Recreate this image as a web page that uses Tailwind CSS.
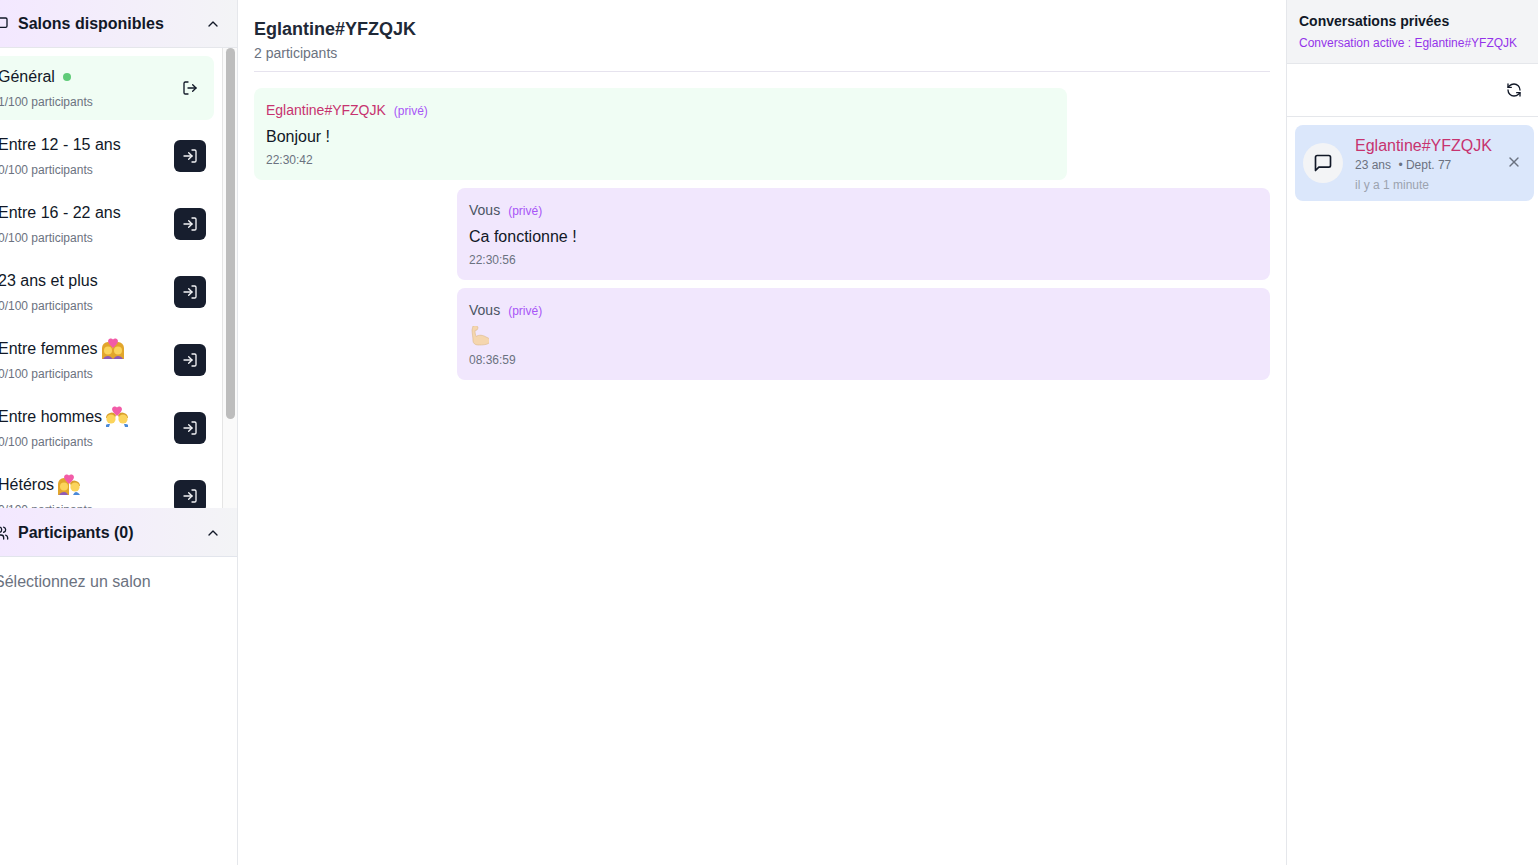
<!DOCTYPE html>
<html lang="fr">
<head>
<meta charset="UTF-8">
<title>Salons</title>
<script src="https://cdn.jsdelivr.net/npm/@tailwindcss/browser@4"></script>
</head>
<body class="bg-white font-['Liberation_Sans',Arial,sans-serif] overflow-hidden">
<div class="flex h-[865px] w-[1538px] overflow-hidden">

  <!-- Salons / participants -->
  <aside class="w-[238px] shrink-0 border-r border-[#e5e7eb] flex flex-col overflow-hidden">
    <div class="h-[48px] shrink-0 flex items-center justify-between pr-4 border-b border-[#e5e7eb] bg-gradient-to-r from-[#f3e8ff] to-[#f3f4f6]">
      <div class="flex items-center gap-[9px] -ml-[7px]">
        <svg class="w-4 h-4 text-[#111827]" viewBox="0 0 24 24" fill="none" stroke="currentColor" stroke-width="2" stroke-linecap="round" stroke-linejoin="round"><path d="M21 15a2 2 0 0 1-2 2H7l-4 4V5a2 2 0 0 1 2-2h14a2 2 0 0 1 2 2z"/></svg>
        <span class="text-base font-bold text-[#111827]">Salons disponibles</span>
      </div>
      <svg class="w-4 h-4 text-[#111827]" viewBox="0 0 24 24" fill="none" stroke="currentColor" stroke-width="2" stroke-linecap="round" stroke-linejoin="round"><path d="m18 15-6-6-6 6"/></svg>
    </div>
    <div class="h-[460px] shrink-0 flex overflow-hidden">
      <div class="flex-1 min-w-0 pt-2 flex flex-col gap-1 overflow-hidden pr-2">

        <div class="h-16 shrink-0 flex items-center justify-between bg-[#f0fdf4] rounded-lg pl-3 -ml-[13px] pr-2">
          <div class="pb-px">
            <div class="flex items-center gap-2 h-6 text-base text-[#111827] -ml-px">Général <span class="w-2 h-2 rounded-full bg-[#5fcb78]"></span></div>
            <div class="mt-[5px] text-xs text-[#6b7280] -ml-px">1/100 participants</div>
          </div>
          <button class="w-8 h-8 flex items-center justify-center text-[#111827]">
            <svg class="w-4 h-4" viewBox="0 0 24 24" fill="none" stroke="currentColor" stroke-width="2" stroke-linecap="round" stroke-linejoin="round"><path d="M9 21H5a2 2 0 0 1-2-2V5a2 2 0 0 1 2-2h4"/><path d="m16 17 5-5-5-5"/><path d="M21 12H9"/></svg>
          </button>
        </div>

        <div class="h-16 shrink-0 flex items-center justify-between rounded-lg pl-3 -ml-[13px] pr-2">
          <div class="pb-px">
            <div class="h-6 text-base text-[#111827] -ml-px">Entre 12 - 15 ans</div>
            <div class="mt-[5px] text-xs text-[#6b7280] -ml-px">0/100 participants</div>
          </div>
          <button class="w-8 h-8 rounded-md bg-[#171e2e] flex items-center justify-center text-[#f3f4f6]">
            <svg class="w-4 h-4" viewBox="0 0 24 24" fill="none" stroke="currentColor" stroke-width="2" stroke-linecap="round" stroke-linejoin="round"><path d="M15 3h4a2 2 0 0 1 2 2v14a2 2 0 0 1-2 2h-4"/><path d="m10 17 5-5-5-5"/><path d="M15 12H3"/></svg>
          </button>
        </div>

        <div class="h-16 shrink-0 flex items-center justify-between rounded-lg pl-3 -ml-[13px] pr-2">
          <div class="pb-px">
            <div class="h-6 text-base text-[#111827] -ml-px">Entre 16 - 22 ans</div>
            <div class="mt-[5px] text-xs text-[#6b7280] -ml-px">0/100 participants</div>
          </div>
          <button class="w-8 h-8 rounded-md bg-[#171e2e] flex items-center justify-center text-[#f3f4f6]">
            <svg class="w-4 h-4" viewBox="0 0 24 24" fill="none" stroke="currentColor" stroke-width="2" stroke-linecap="round" stroke-linejoin="round"><path d="M15 3h4a2 2 0 0 1 2 2v14a2 2 0 0 1-2 2h-4"/><path d="m10 17 5-5-5-5"/><path d="M15 12H3"/></svg>
          </button>
        </div>

        <div class="h-16 shrink-0 flex items-center justify-between rounded-lg pl-3 -ml-[13px] pr-2">
          <div class="pb-px">
            <div class="h-6 text-base text-[#111827] -ml-px">23 ans et plus</div>
            <div class="mt-[5px] text-xs text-[#6b7280] -ml-px">0/100 participants</div>
          </div>
          <button class="w-8 h-8 rounded-md bg-[#171e2e] flex items-center justify-center text-[#f3f4f6]">
            <svg class="w-4 h-4" viewBox="0 0 24 24" fill="none" stroke="currentColor" stroke-width="2" stroke-linecap="round" stroke-linejoin="round"><path d="M15 3h4a2 2 0 0 1 2 2v14a2 2 0 0 1-2 2h-4"/><path d="m10 17 5-5-5-5"/><path d="M15 12H3"/></svg>
          </button>
        </div>

        <div class="h-16 shrink-0 flex items-center justify-between rounded-lg pl-3 -ml-[13px] pr-2">
          <div class="pb-px">
            <div class="flex items-center gap-1 h-6 text-base text-[#111827] -ml-px">Entre femmes
              <svg class="w-[22px] h-[22px]" viewBox="0 0 22 22"><path d="M0 21V10a6 6 0 0 1 6-6c3 0 5 3 5 7 0-4 2-7 5-7a6 6 0 0 1 6 6v11z" fill="#e2a62c"/><path d="M1 21c1-2 3-3 5-3s3 1 5 3c2-2 3-3 5-3s4 1 5 3z" fill="#8e5bb5"/><circle cx="6" cy="12.500" r="4" fill="#fbd45c"/><circle cx="16" cy="12.500" r="4" fill="#fbd45c"/><path d="M11 10C8 7 6 5 6 3a2.800 2.800 0 0 1 5-1.500A2.800 2.800 0 0 1 16 3c0 2-2 4-5 7z" fill="#f25ca8"/></svg>
            </div>
            <div class="mt-[5px] text-xs text-[#6b7280] -ml-px">0/100 participants</div>
          </div>
          <button class="w-8 h-8 rounded-md bg-[#171e2e] flex items-center justify-center text-[#f3f4f6]">
            <svg class="w-4 h-4" viewBox="0 0 24 24" fill="none" stroke="currentColor" stroke-width="2" stroke-linecap="round" stroke-linejoin="round"><path d="M15 3h4a2 2 0 0 1 2 2v14a2 2 0 0 1-2 2h-4"/><path d="m10 17 5-5-5-5"/><path d="M15 12H3"/></svg>
          </button>
        </div>

        <div class="h-16 shrink-0 flex items-center justify-between rounded-lg pl-3 -ml-[13px] pr-2">
          <div class="pb-px">
            <div class="flex items-center gap-1 h-6 text-base text-[#111827] -ml-px">Entre hommes
              <svg class="w-[22px] h-[22px]" viewBox="0 0 22 22"><path d="M0 21v-2c0-1 2-1 4-1l-1 3zM22 21v-2c0-1-2-1-4-1l1 3z" fill="#4a89d8"/><path d="M0 12a5.500 5.500 0 0 1 10-3l-1 3H0z" fill="#d9a02c"/><path d="M22 12a5.500 5.500 0 0 0-10-3l1 3h9z" fill="#d9a02c"/><circle cx="5" cy="13" r="4.600" fill="#fbd45c"/><circle cx="17" cy="13" r="4.600" fill="#fbd45c"/><path d="M11 10C8 7 6 5 6 3a2.800 2.800 0 0 1 5-1.500A2.800 2.800 0 0 1 16 3c0 2-2 4-5 7z" fill="#f25ca8"/></svg>
            </div>
            <div class="mt-[5px] text-xs text-[#6b7280] -ml-px">0/100 participants</div>
          </div>
          <button class="w-8 h-8 rounded-md bg-[#171e2e] flex items-center justify-center text-[#f3f4f6]">
            <svg class="w-4 h-4" viewBox="0 0 24 24" fill="none" stroke="currentColor" stroke-width="2" stroke-linecap="round" stroke-linejoin="round"><path d="M15 3h4a2 2 0 0 1 2 2v14a2 2 0 0 1-2 2h-4"/><path d="m10 17 5-5-5-5"/><path d="M15 12H3"/></svg>
          </button>
        </div>

        <div class="h-16 shrink-0 flex items-center justify-between rounded-lg pl-3 -ml-[13px] pr-2">
          <div class="pb-px">
            <div class="flex items-center gap-1 h-6 text-base text-[#111827] -ml-px">Hétéros
              <svg class="w-[22px] h-[22px]" viewBox="0 0 22 22"><path d="M0 21V10a6 6 0 0 1 6-6c3 0 5 3 5 7v10z" fill="#e2a62c"/><path d="M1 21c1-2 3-3 5-3s3 1 4 3z" fill="#8e5bb5"/><path d="M15 21c1-2 2-3 3-3s3 1 4 3z" fill="#4a89d8"/><path d="M22 12a5.500 5.500 0 0 0-10-3l1 3h9z" fill="#d9a02c"/><circle cx="6" cy="12.500" r="4" fill="#fbd45c"/><circle cx="17" cy="13" r="4.600" fill="#fbd45c"/><path d="M11 10C8 7 6 5 6 3a2.800 2.800 0 0 1 5-1.500A2.800 2.800 0 0 1 16 3c0 2-2 4-5 7z" fill="#f25ca8"/></svg>
            </div>
            <div class="mt-[5px] text-xs text-[#6b7280] -ml-px">0/100 participants</div>
          </div>
          <button class="w-8 h-8 rounded-md bg-[#171e2e] flex items-center justify-center text-[#f3f4f6]">
            <svg class="w-4 h-4" viewBox="0 0 24 24" fill="none" stroke="currentColor" stroke-width="2" stroke-linecap="round" stroke-linejoin="round"><path d="M15 3h4a2 2 0 0 1 2 2v14a2 2 0 0 1-2 2h-4"/><path d="m10 17 5-5-5-5"/><path d="M15 12H3"/></svg>
          </button>
        </div>
      </div>
      <!-- scrollbar -->
      <div class="w-[15px] shrink-0 bg-[#fafafa] border-l border-[#e5e5e5] pl-[3px] pr-[2px]">
        <div class="h-[371px] rounded-full bg-[#bdbdbd]"></div>
      </div>
    </div>
    <div class="h-[49px] shrink-0 pt-px flex items-center justify-between pr-4 border-b border-[#e2e5ec] bg-gradient-to-r from-[#f3e8ff] to-[#f3f4f6]">
      <div class="flex items-center gap-[9px] -ml-[7px]">
        <svg class="w-4 h-4 text-[#111827]" viewBox="0 0 24 24" fill="none" stroke="currentColor" stroke-width="2" stroke-linecap="round" stroke-linejoin="round"><path d="M16 21v-2a4 4 0 0 0-4-4H6a4 4 0 0 0-4 4v2"/><circle cx="9" cy="7" r="4"/><path d="M22 21v-2a4 4 0 0 0-3-3.87"/><path d="M16 3.13a4 4 0 0 1 0 7.75"/></svg>
        <span class="text-base font-bold text-[#111827]">Participants (0)</span>
      </div>
      <svg class="w-4 h-4 text-[#111827]" viewBox="0 0 24 24" fill="none" stroke="currentColor" stroke-width="2" stroke-linecap="round" stroke-linejoin="round"><path d="m18 15-6-6-6 6"/></svg>
    </div>
    <p class="-ml-[6px] mt-[13px] text-base text-[#6b7280]">Sélectionnez un salon</p>
  </aside>

  <!-- Conversation -->
  <main class="flex-1 min-w-0 px-4">
    <div class="h-[72px] border-b border-[#e6e3ee] pt-[15px]">
      <h1 class="text-lg leading-[28px] font-bold text-[#1f2937]">Eglantine#YFZQJK</h1>
      <p class="text-sm leading-[20px] text-[#6b7280]">2 participants</p>
    </div>
    <div class="pt-4 flex flex-col gap-2">
      <div class="w-[813px] h-[92px] rounded-lg bg-[#f0fdf4] p-3">
        <div class="flex items-baseline gap-2 text-sm leading-[20px]"><span class="text-[#c7336f]">Eglantine#YFZQJK</span><span class="text-xs text-[#a855f7]">(privé)</span></div>
        <p class="mt-[5px] text-base leading-[24px] text-[#111827]">Bonjour !</p>
        <p class="mt-[3px] text-xs text-[#6b7280]">22:30:42</p>
      </div>
      <div class="w-[813px] h-[92px] self-end rounded-lg bg-[#f1e7fd] p-3">
        <div class="flex items-baseline gap-2 text-sm leading-[20px]"><span class="text-[#4b5563]">Vous</span><span class="text-xs text-[#a855f7]">(privé)</span></div>
        <p class="mt-[5px] text-base leading-[24px] text-[#111827]">Ca fonctionne !</p>
        <p class="mt-[3px] text-xs text-[#6b7280]">22:30:56</p>
      </div>
      <div class="w-[813px] h-[92px] self-end rounded-lg bg-[#f1e7fd] p-3">
        <div class="flex items-baseline gap-2 text-sm leading-[20px]"><span class="text-[#4b5563]">Vous</span><span class="text-xs text-[#a855f7]">(privé)</span></div>
        <div class="mt-1 h-6 flex items-center">
          <svg class="w-5 h-5" viewBox="5 5 20 20"><path d="M9 5c3-1 5 0 5 2l-1 2-2 .5c0 2.500.5 4.500 1 6 3-2 7-1.500 10 .5 3 1 5 3 4 5-2 3-8 3-12 3-3 0-5-2-5-4 0-4-1-8-1-11z" fill="#f5d6ae" stroke="#dcb888" stroke-width=".6"/></svg>
        </div>
        <p class="mt-1 text-xs text-[#6b7280]">08:36:59</p>
      </div>
    </div>
  </main>

  <!-- Conversations privees -->
  <aside class="w-[252px] shrink-0 border-l border-[#e5e7eb] flex flex-col">
    <div class="h-[64px] border-b border-[#e5e7eb] bg-[#f3f4f6] pl-3 pt-[13px]">
      <h2 class="text-sm leading-[16px] font-bold text-[#111827]">Conversations privées</h2>
      <p class="mt-[6px] text-xs text-[#9333ea]">Conversation active : Eglantine#YFZQJK</p>
    </div>
    <div class="h-[53px] border-b border-[#e5e7eb] flex items-center justify-end pr-4">
      <svg class="w-4 h-4 text-[#111827]" viewBox="0 0 24 24" fill="none" stroke="currentColor" stroke-width="2" stroke-linecap="round" stroke-linejoin="round"><path d="M21 12a9 9 0 0 0-9-9 9.75 9.75 0 0 0-6.74 2.74L3 8"/><path d="M3 3v5h5"/><path d="M3 12a9 9 0 0 0 9 9 9.75 9.75 0 0 0 6.74-2.74L21 16"/><path d="M16 16h5v5"/></svg>
    </div>
    <div class="pt-2 pl-2 pr-1">
      <div class="h-[76px] rounded-lg bg-[#dbe7fb] flex items-center pl-2 pr-3">
        <div class="w-10 h-10 rounded-full bg-[#f3f4f6] flex items-center justify-center text-[#111827]">
          <svg class="w-5 h-5" viewBox="0 0 24 24" fill="none" stroke="currentColor" stroke-width="2" stroke-linecap="round" stroke-linejoin="round"><path d="M21 15a2 2 0 0 1-2 2H7l-4 4V5a2 2 0 0 1 2-2h14a2 2 0 0 1 2 2z"/></svg>
        </div>
        <div class="ml-3 flex-1 pt-[2px]">
          <div class="text-base leading-[22px] text-[#c7336f]">Eglantine#YFZQJK</div>
          <div class="text-xs leading-[16px] text-[#6b7280]">23 ans <span class="ml-1">• Dept. 77</span></div>
          <div class="mt-1 text-xs leading-[16px] text-[#9ca3af]">il y a 1 minute</div>
        </div>
        <svg class="w-4 h-4 mb-[2px] text-[#6b7280]" viewBox="0 0 24 24" fill="none" stroke="currentColor" stroke-width="2" stroke-linecap="round" stroke-linejoin="round"><path d="M18 6 6 18"/><path d="m6 6 12 12"/></svg>
      </div>
    </div>
  </aside>
</div>
</body>
</html>
